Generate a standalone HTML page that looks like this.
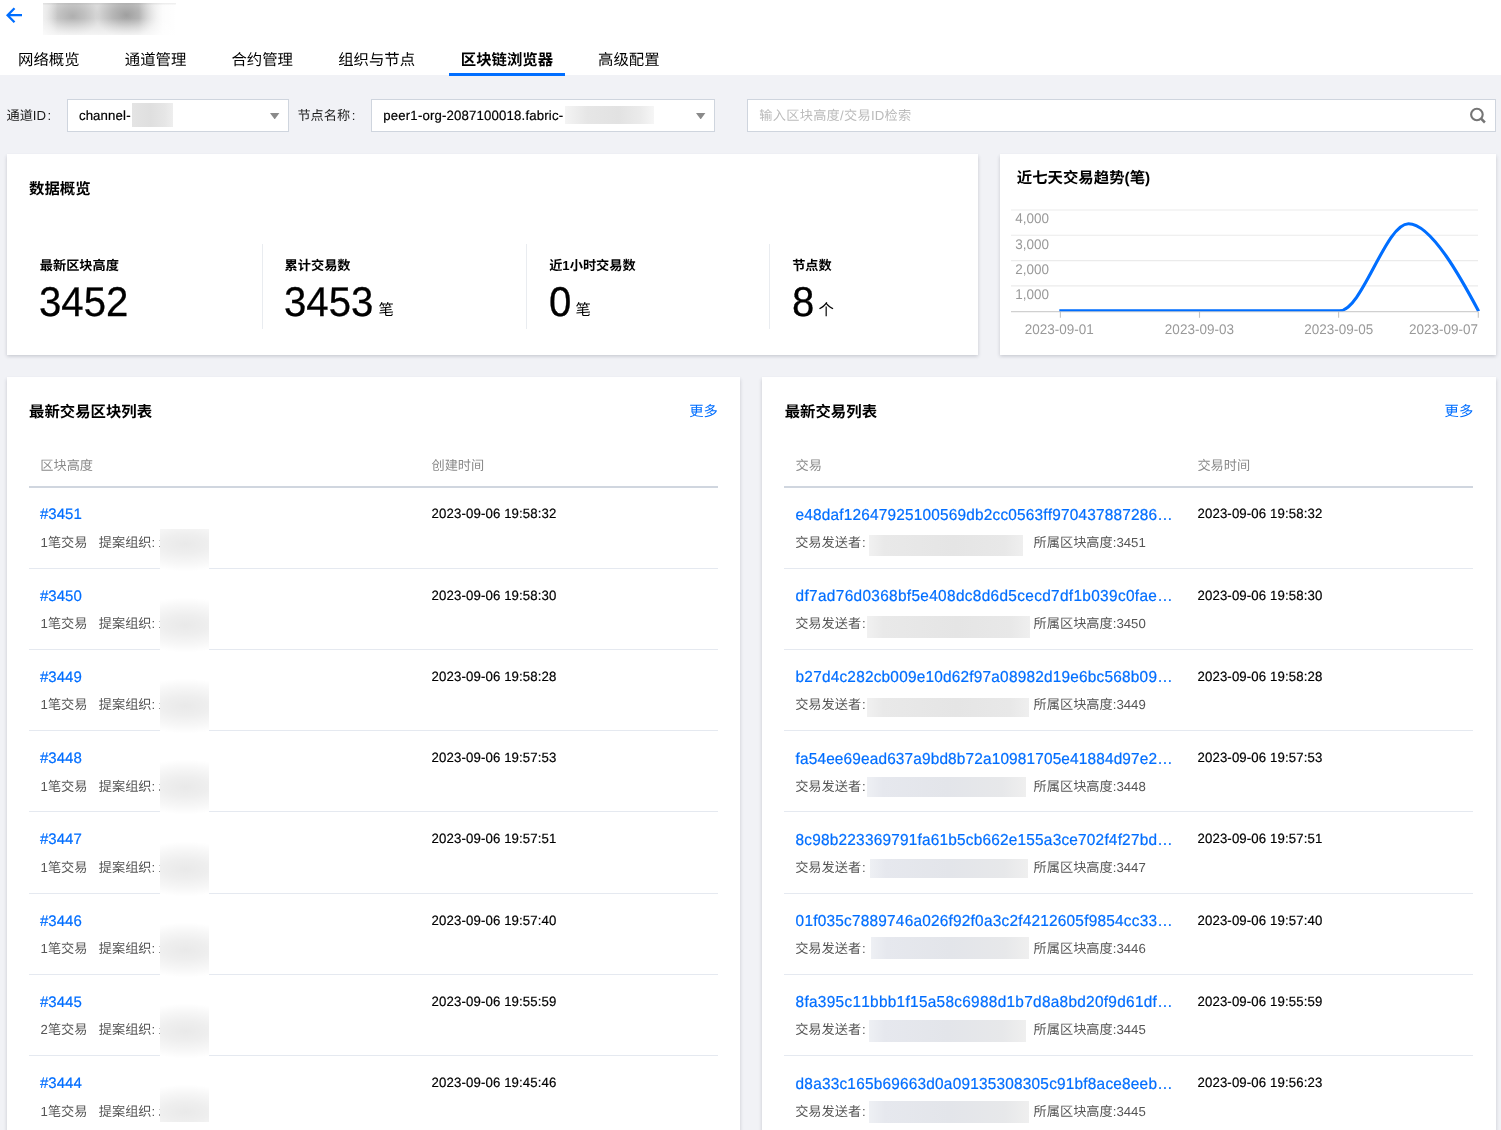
<!DOCTYPE html>
<html lang="zh-CN"><head><meta charset="utf-8"><title>区块链浏览器</title><style>
html,body{margin:0;padding:0}
body{width:1501px;height:1130px;overflow:hidden;position:relative;background:#f1f2f6;font-family:"Liberation Sans","Noto Sans CJK SC",sans-serif;-webkit-font-smoothing:antialiased;text-rendering:geometricPrecision}
#w{position:absolute;left:0;top:0;width:1501px;height:1130px;overflow:hidden;will-change:transform}
.t{position:absolute;white-space:nowrap}
.k{font-kerning:none;font-variant-ligatures:none}
.hash .j{display:inline-block}
</style></head>
<body>
<div id="w">
<div style="position:absolute;left:0.00px;top:0.00px;width:1501.00px;height:75.00px;background:#fff"></div>
<svg style="position:absolute;left:0;top:0" width="30" height="30" viewBox="0 0 30 30"><path d="M14.5 8.2 L7.6 15.2 L14.5 22.2 M7.9 15.2 H22" fill="none" stroke="#006eff" stroke-width="2.3"/></svg>
<div style="position:absolute;left:43.00px;top:3.00px;width:133.00px;height:32.00px;background:linear-gradient(to bottom, rgba(90,90,90,.11) 0, rgba(90,90,90,.07) 1px, rgba(90,90,90,0) 2.5px),linear-gradient(to bottom, rgba(255,255,255,0) 48%, rgba(255,255,255,.72) 100%),linear-gradient(to right, rgba(255,255,255,.6) 0%, rgba(255,255,255,0) 11%, rgba(255,255,255,0) 72%, rgba(255,255,255,.92) 90%, #fff 100%),radial-gradient(ellipse 27px 21px at 29.5px 13px, rgba(100,100,100,.36), rgba(100,100,100,.22) 45%, rgba(100,100,100,0) 100%),radial-gradient(ellipse 31px 23px at 83.5px 12px, rgba(90,90,90,.46), rgba(90,90,90,.28) 45%, rgba(90,90,90,0) 100%),linear-gradient(#dadada,#dadada)"></div>
<div class="t" style="top:50.16px;font-size:15.4px;line-height:22px;color:#000;left:18.00px;">网络概览</div>
<div class="t" style="top:50.16px;font-size:15.4px;line-height:22px;color:#000;left:124.80px;">通道管理</div>
<div class="t" style="top:50.16px;font-size:15.4px;line-height:22px;color:#000;left:231.40px;">合约管理</div>
<div class="t" style="top:50.16px;font-size:15.4px;line-height:22px;color:#000;left:338.20px;">组织与节点</div>
<div class="t" style="top:50.16px;font-size:15.4px;line-height:22px;color:#000;left:460.80px;"><span style="font-weight:bold">区块链浏览器</span></div>
<div class="t" style="top:50.16px;font-size:15.4px;line-height:22px;color:#000;left:598.00px;">高级配置</div>
<div style="position:absolute;left:449.00px;top:73.40px;width:116.00px;height:3.00px;background:#006eff"></div>
<div class="t" style="top:106.13px;font-size:13.2px;line-height:19px;color:#1c1c1c;left:6.50px;">通道ID<span style="margin-left:1.5px">:</span></div>
<div style="position:absolute;left:67.00px;top:99.00px;width:222.40px;height:33.00px;background:#fff;border:1px solid #cfd5de;box-sizing:border-box"></div>
<div class="t" style="top:105.93px;font-size:13.2px;line-height:19px;color:#000;left:78.90px;transform:scale(1,1.02);transform-origin:0 14.07px;-webkit-text-stroke:0.2px #000;letter-spacing:0.15px">channel-</div>
<div style="position:absolute;left:132.00px;top:103.00px;width:40.70px;height:24.00px;background:linear-gradient(to right,#e4e4e4 0%,#dfdfdf 45%,#e6e6e6 80%,#eeeeee 100%)"></div>
<svg style="position:absolute;left:270.3px;top:112.8px" width="9.4" height="6.4" viewBox="0 0 9.4 6.4"><path d="M0 0H9.4L4.7 6.4Z" fill="#8a8a8a"/></svg>
<div class="t" style="top:106.13px;font-size:13.2px;line-height:19px;color:#1c1c1c;left:297.40px;">节点名称<span style="margin-left:1.5px">:</span></div>
<div style="position:absolute;left:370.80px;top:99.00px;width:344.30px;height:33.00px;background:#fff;border:1px solid #cfd5de;box-sizing:border-box"></div>
<div class="t k" style="top:105.93px;font-size:13.2px;line-height:19px;color:#000;left:383.30px;transform:scale(1,1.02);transform-origin:0 14.07px;-webkit-text-stroke:0.2px #000;letter-spacing:0.17px">peer1-org-2087100018.fabric-</div>
<div style="position:absolute;left:564.50px;top:105.80px;width:89.30px;height:18.70px;background:linear-gradient(to right,#f4f4f4 0%,#e6e6e6 25%,#e2e2e2 60%,#ebebeb 85%,#f6f6f6 100%)"></div>
<svg style="position:absolute;left:696.4px;top:112.8px" width="9.4" height="6.4" viewBox="0 0 9.4 6.4"><path d="M0 0H9.4L4.7 6.4Z" fill="#8a8a8a"/></svg>
<div style="position:absolute;left:747.30px;top:99.00px;width:748.80px;height:33.00px;background:#fff;border:1px solid #cfd5de;box-sizing:border-box"></div>
<div class="t" style="top:106.13px;font-size:13.2px;line-height:19px;color:#bbb;left:759.30px;letter-spacing:0.27px">输入区块高度/交易ID检索</div>
<svg style="position:absolute;left:1466px;top:105px" width="24" height="22" viewBox="0 0 24 22"><circle cx="10.9" cy="9.5" r="5.8" fill="none" stroke="#757575" stroke-width="2.1"/><path d="M15.1 13.7 L18.9 17.5" stroke="#757575" stroke-width="2.5" fill="none"/></svg>
<div style="position:absolute;left:7.00px;top:154.00px;width:971.00px;height:200.50px;background:#fff;box-shadow:0 2.2px 3.5px 0 rgba(54,58,80,.24);"></div>
<div style="position:absolute;left:1000.00px;top:154.00px;width:495.60px;height:200.50px;background:#fff;box-shadow:0 2.2px 3.5px 0 rgba(54,58,80,.24);"></div>
<div style="position:absolute;left:7.00px;top:377.00px;width:733.00px;height:763.00px;background:#fff;box-shadow:0 2.2px 3.5px 0 rgba(54,58,80,.24);"></div>
<div style="position:absolute;left:762.30px;top:377.00px;width:733.30px;height:763.00px;background:#fff;box-shadow:0 2.2px 3.5px 0 rgba(54,58,80,.24);"></div>
<div class="t" style="top:179.16px;font-size:15.4px;line-height:22px;color:#000;left:29.00px;"><span style="font-weight:bold">数据概览</span></div>
<div class="t" style="top:255.73px;font-size:13.2px;line-height:19px;color:#000;left:39.80px;font-weight:bold">最新区块高度</div>
<div class="t k" style="top:277.68px;font-size:39.6px;line-height:50px;color:#000;left:39.40px;transform:scale(1.015,1.05);transform-origin:0 38.72px;-webkit-text-stroke:0.3px #000;">3452</div>
<div class="t" style="top:255.73px;font-size:13.2px;line-height:19px;color:#000;left:284.60px;font-weight:bold">累计交易数</div>
<div class="t k" style="top:277.68px;font-size:39.6px;line-height:50px;color:#000;left:284.20px;transform:scale(1.015,1.05);transform-origin:0 38.72px;-webkit-text-stroke:0.3px #000;">3453</div>
<div class="t" style="top:300.26px;font-size:15.4px;line-height:22px;color:#000;left:378.40px;">笔</div>
<div class="t" style="top:255.73px;font-size:13.2px;line-height:19px;color:#000;left:549.20px;font-weight:bold">近1小时交易数</div>
<div class="t k" style="top:277.68px;font-size:39.6px;line-height:50px;color:#000;left:548.80px;transform:scale(1.015,1.05);transform-origin:0 38.72px;-webkit-text-stroke:0.3px #000;">0</div>
<div class="t" style="top:300.26px;font-size:15.4px;line-height:22px;color:#000;left:575.40px;">笔</div>
<div class="t" style="top:255.73px;font-size:13.2px;line-height:19px;color:#000;left:792.20px;font-weight:bold">节点数</div>
<div class="t k" style="top:277.68px;font-size:39.6px;line-height:50px;color:#000;left:791.80px;transform:scale(1.015,1.05);transform-origin:0 38.72px;-webkit-text-stroke:0.3px #000;">8</div>
<div class="t" style="top:300.26px;font-size:15.4px;line-height:22px;color:#000;left:818.40px;">个</div>
<div style="position:absolute;left:262.30px;top:244.30px;width:1.00px;height:85.00px;background:#e9ecf0"></div>
<div style="position:absolute;left:526.30px;top:244.30px;width:1.00px;height:85.00px;background:#e9ecf0"></div>
<div style="position:absolute;left:769.20px;top:244.30px;width:1.00px;height:85.00px;background:#e9ecf0"></div>
<div class="t" style="top:168.16px;font-size:15.4px;line-height:22px;color:#000;left:1016.80px;font-weight:bold">近七天交易趋势(笔)</div>
<svg style="position:absolute;left:1000px;top:154px" width="496" height="200" viewBox="1000 154 496 200"><path d="M1011 210H1478" stroke="#ebebeb" stroke-width="1.1"/><path d="M1011 235.3H1478" stroke="#ebebeb" stroke-width="1.1"/><path d="M1011 260.6H1478" stroke="#ebebeb" stroke-width="1.1"/><path d="M1011 285.9H1478" stroke="#ebebeb" stroke-width="1.1"/><path d="M1011 311.6H1478" stroke="#d0d0d0" stroke-width="1.1"/><path d="M1060.4 311.6V317.8" stroke="#c4c4c4" stroke-width="1.1"/><path d="M1199.5 311.6V317.8" stroke="#c4c4c4" stroke-width="1.1"/><path d="M1338.6 311.6V317.8" stroke="#c4c4c4" stroke-width="1.1"/><path d="M1478.3 311.6V317.8" stroke="#c4c4c4" stroke-width="1.1"/><clipPath id="cp"><rect x="1000" y="200" width="480" height="111.3"/></clipPath><path clip-path="url(#cp)" d="M1059.3 310.9 H1339.3 C1362.3 310.9 1385.5 223.7 1408.5 223.7 C1431.5 223.7 1462 280 1478.7 311.3" fill="none" stroke="#006eff" stroke-width="3.1" stroke-linejoin="round"/></svg>
<div class="t" style="top:209.12px;font-size:13.5px;line-height:19px;color:#999;left:1015.20px;transform:scale(1,1.04);transform-origin:0 14.18px;">4,000</div>
<div class="t" style="top:234.52px;font-size:13.5px;line-height:19px;color:#999;left:1015.20px;transform:scale(1,1.04);transform-origin:0 14.18px;">3,000</div>
<div class="t" style="top:259.72px;font-size:13.5px;line-height:19px;color:#999;left:1015.20px;transform:scale(1,1.04);transform-origin:0 14.18px;">2,000</div>
<div class="t" style="top:285.12px;font-size:13.5px;line-height:19px;color:#999;left:1015.20px;transform:scale(1,1.04);transform-origin:0 14.18px;">1,000</div>
<div class="t" style="top:319.62px;font-size:13.5px;line-height:19px;color:#999;left:759.30px;width:600px;text-align:center;transform:scale(1,1.04);transform-origin:50% 14.18px;">2023-09-01</div>
<div class="t" style="top:319.62px;font-size:13.5px;line-height:19px;color:#999;left:899.40px;width:600px;text-align:center;transform:scale(1,1.04);transform-origin:50% 14.18px;">2023-09-03</div>
<div class="t" style="top:319.62px;font-size:13.5px;line-height:19px;color:#999;left:1038.70px;width:600px;text-align:center;transform:scale(1,1.04);transform-origin:50% 14.18px;">2023-09-05</div>
<div class="t" style="top:319.62px;font-size:13.5px;line-height:19px;color:#999;right:23.00px;transform:scale(1,1.04);transform-origin:100% 14.18px;">2023-09-07</div>
<div class="t" style="top:402.06px;font-size:15.4px;line-height:22px;color:#000;left:29.00px;font-weight:bold">最新交易区块列表</div>
<div class="t" style="top:402.35px;font-size:14.3px;line-height:21px;color:#006eff;right:783.10px;">更多</div>
<div class="t" style="top:456.23px;font-size:13.2px;line-height:19px;color:#8a8a8a;left:40.30px;">区块高度</div>
<div class="t" style="top:456.23px;font-size:13.2px;line-height:19px;color:#8a8a8a;left:431.50px;">创建时间</div>
<div style="position:absolute;left:29.30px;top:486.10px;width:688.60px;height:1.50px;background:#d0d6df"></div>
<div class="t k" style="top:503.66px;font-size:15.4px;line-height:22px;color:#006eff;left:40.00px;transform:scale(0.975,0.99);transform-origin:0 16.34px;-webkit-text-stroke:0.2px #006eff;margin-top:0.6px">#3451</div>
<div class="t" style="top:532.83px;font-size:13.2px;line-height:19px;color:#555;left:40.60px;transform:translateY(0.4px)"><span class="d">1</span>笔交易<span style="margin-left:11.3px"></span>提案组织:</div>
<div class="t k" style="top:504.33px;font-size:13.2px;line-height:19px;color:#000;left:431.60px;transform:scale(1,1.02);transform-origin:0 14.07px;-webkit-text-stroke:0.2px #000;letter-spacing:0.13px">2023-09-06 19:58:32</div>
<div style="position:absolute;left:29.30px;top:567.50px;width:688.60px;height:1.10px;background:#e5e9f0"></div>
<div class="t k" style="top:584.91px;font-size:15.4px;line-height:22px;color:#006eff;left:40.00px;transform:scale(0.975,0.99);transform-origin:0 16.34px;-webkit-text-stroke:0.2px #006eff;margin-top:0.6px">#3450</div>
<div class="t" style="top:614.08px;font-size:13.2px;line-height:19px;color:#555;left:40.60px;transform:translateY(0.4px)"><span class="d">1</span>笔交易<span style="margin-left:11.3px"></span>提案组织:</div>
<div class="t k" style="top:585.58px;font-size:13.2px;line-height:19px;color:#000;left:431.60px;transform:scale(1,1.02);transform-origin:0 14.07px;-webkit-text-stroke:0.2px #000;letter-spacing:0.13px">2023-09-06 19:58:30</div>
<div style="position:absolute;left:29.30px;top:648.75px;width:688.60px;height:1.10px;background:#e5e9f0"></div>
<div class="t k" style="top:666.16px;font-size:15.4px;line-height:22px;color:#006eff;left:40.00px;transform:scale(0.975,0.99);transform-origin:0 16.34px;-webkit-text-stroke:0.2px #006eff;margin-top:0.6px">#3449</div>
<div class="t" style="top:695.33px;font-size:13.2px;line-height:19px;color:#555;left:40.60px;transform:translateY(0.4px)"><span class="d">1</span>笔交易<span style="margin-left:11.3px"></span>提案组织:</div>
<div class="t k" style="top:666.83px;font-size:13.2px;line-height:19px;color:#000;left:431.60px;transform:scale(1,1.02);transform-origin:0 14.07px;-webkit-text-stroke:0.2px #000;letter-spacing:0.13px">2023-09-06 19:58:28</div>
<div style="position:absolute;left:29.30px;top:730.00px;width:688.60px;height:1.10px;background:#e5e9f0"></div>
<div class="t k" style="top:747.41px;font-size:15.4px;line-height:22px;color:#006eff;left:40.00px;transform:scale(0.975,0.99);transform-origin:0 16.34px;-webkit-text-stroke:0.2px #006eff;margin-top:0.6px">#3448</div>
<div class="t" style="top:776.58px;font-size:13.2px;line-height:19px;color:#555;left:40.60px;transform:translateY(0.4px)"><span class="d">1</span>笔交易<span style="margin-left:11.3px"></span>提案组织:</div>
<div class="t k" style="top:748.08px;font-size:13.2px;line-height:19px;color:#000;left:431.60px;transform:scale(1,1.02);transform-origin:0 14.07px;-webkit-text-stroke:0.2px #000;letter-spacing:0.13px">2023-09-06 19:57:53</div>
<div style="position:absolute;left:29.30px;top:811.25px;width:688.60px;height:1.10px;background:#e5e9f0"></div>
<div class="t k" style="top:828.66px;font-size:15.4px;line-height:22px;color:#006eff;left:40.00px;transform:scale(0.975,0.99);transform-origin:0 16.34px;-webkit-text-stroke:0.2px #006eff;margin-top:0.6px">#3447</div>
<div class="t" style="top:857.83px;font-size:13.2px;line-height:19px;color:#555;left:40.60px;transform:translateY(0.4px)"><span class="d">1</span>笔交易<span style="margin-left:11.3px"></span>提案组织:</div>
<div class="t k" style="top:829.33px;font-size:13.2px;line-height:19px;color:#000;left:431.60px;transform:scale(1,1.02);transform-origin:0 14.07px;-webkit-text-stroke:0.2px #000;letter-spacing:0.13px">2023-09-06 19:57:51</div>
<div style="position:absolute;left:29.30px;top:892.50px;width:688.60px;height:1.10px;background:#e5e9f0"></div>
<div class="t k" style="top:909.91px;font-size:15.4px;line-height:22px;color:#006eff;left:40.00px;transform:scale(0.975,0.99);transform-origin:0 16.34px;-webkit-text-stroke:0.2px #006eff;margin-top:0.6px">#3446</div>
<div class="t" style="top:939.08px;font-size:13.2px;line-height:19px;color:#555;left:40.60px;transform:translateY(0.4px)"><span class="d">1</span>笔交易<span style="margin-left:11.3px"></span>提案组织:</div>
<div class="t k" style="top:910.58px;font-size:13.2px;line-height:19px;color:#000;left:431.60px;transform:scale(1,1.02);transform-origin:0 14.07px;-webkit-text-stroke:0.2px #000;letter-spacing:0.13px">2023-09-06 19:57:40</div>
<div style="position:absolute;left:29.30px;top:973.75px;width:688.60px;height:1.10px;background:#e5e9f0"></div>
<div class="t k" style="top:991.16px;font-size:15.4px;line-height:22px;color:#006eff;left:40.00px;transform:scale(0.975,0.99);transform-origin:0 16.34px;-webkit-text-stroke:0.2px #006eff;margin-top:0.6px">#3445</div>
<div class="t" style="top:1020.33px;font-size:13.2px;line-height:19px;color:#555;left:40.60px;transform:translateY(0.4px)"><span class="d">2</span>笔交易<span style="margin-left:11.3px"></span>提案组织:</div>
<div class="t k" style="top:991.83px;font-size:13.2px;line-height:19px;color:#000;left:431.60px;transform:scale(1,1.02);transform-origin:0 14.07px;-webkit-text-stroke:0.2px #000;letter-spacing:0.13px">2023-09-06 19:55:59</div>
<div style="position:absolute;left:29.30px;top:1055.00px;width:688.60px;height:1.10px;background:#e5e9f0"></div>
<div class="t k" style="top:1072.41px;font-size:15.4px;line-height:22px;color:#006eff;left:40.00px;transform:scale(0.975,0.99);transform-origin:0 16.34px;-webkit-text-stroke:0.2px #006eff;margin-top:0.6px">#3444</div>
<div class="t" style="top:1101.58px;font-size:13.2px;line-height:19px;color:#555;left:40.60px;transform:translateY(0.4px)"><span class="d">1</span>笔交易<span style="margin-left:11.3px"></span>提案组织:</div>
<div class="t k" style="top:1073.08px;font-size:13.2px;line-height:19px;color:#000;left:431.60px;transform:scale(1,1.02);transform-origin:0 14.07px;-webkit-text-stroke:0.2px #000;letter-spacing:0.13px">2023-09-06 19:45:46</div>
<div style="position:absolute;left:159.00px;top:540.20px;width:1.00px;height:1.00px;background:#c9c9c9"></div>
<div style="position:absolute;left:159.00px;top:545.70px;width:1.00px;height:1.30px;background:#8e8e8e"></div>
<div style="position:absolute;left:159.00px;top:621.45px;width:1.00px;height:1.00px;background:#c9c9c9"></div>
<div style="position:absolute;left:159.00px;top:626.95px;width:1.00px;height:1.30px;background:#8e8e8e"></div>
<div style="position:absolute;left:159.00px;top:702.70px;width:1.00px;height:1.00px;background:#c9c9c9"></div>
<div style="position:absolute;left:159.00px;top:708.20px;width:1.00px;height:1.30px;background:#8e8e8e"></div>
<div style="position:absolute;left:159.00px;top:783.95px;width:1.00px;height:1.00px;background:#c9c9c9"></div>
<div style="position:absolute;left:159.00px;top:789.45px;width:1.00px;height:1.30px;background:#8e8e8e"></div>
<div style="position:absolute;left:159.00px;top:865.20px;width:1.00px;height:1.00px;background:#c9c9c9"></div>
<div style="position:absolute;left:159.00px;top:870.70px;width:1.00px;height:1.30px;background:#8e8e8e"></div>
<div style="position:absolute;left:159.00px;top:946.45px;width:1.00px;height:1.00px;background:#c9c9c9"></div>
<div style="position:absolute;left:159.00px;top:951.95px;width:1.00px;height:1.30px;background:#8e8e8e"></div>
<div style="position:absolute;left:159.00px;top:1027.70px;width:1.00px;height:1.00px;background:#c9c9c9"></div>
<div style="position:absolute;left:159.00px;top:1033.20px;width:1.00px;height:1.30px;background:#8e8e8e"></div>
<div style="position:absolute;left:159.00px;top:1108.95px;width:1.00px;height:1.00px;background:#c9c9c9"></div>
<div style="position:absolute;left:159.00px;top:1114.45px;width:1.00px;height:1.30px;background:#8e8e8e"></div>
<div style="position:absolute;left:160px;top:529px;width:49px;height:593px;background:#fff;overflow:hidden"><div style="position:absolute;left:0;top:-13.50px;width:49px;height:56px;background:radial-gradient(ellipse 62px 27.5px at 52% 50%, rgba(0,0,0,.085) 0%, rgba(0,0,0,.068) 35%, rgba(0,0,0,.03) 72%, rgba(0,0,0,0) 100%)"></div><div style="position:absolute;left:0;top:67.75px;width:49px;height:56px;background:radial-gradient(ellipse 62px 27.5px at 52% 50%, rgba(0,0,0,.085) 0%, rgba(0,0,0,.068) 35%, rgba(0,0,0,.03) 72%, rgba(0,0,0,0) 100%)"></div><div style="position:absolute;left:0;top:149.00px;width:49px;height:56px;background:radial-gradient(ellipse 62px 27.5px at 52% 50%, rgba(0,0,0,.085) 0%, rgba(0,0,0,.068) 35%, rgba(0,0,0,.03) 72%, rgba(0,0,0,0) 100%)"></div><div style="position:absolute;left:0;top:230.25px;width:49px;height:56px;background:radial-gradient(ellipse 62px 27.5px at 52% 50%, rgba(0,0,0,.085) 0%, rgba(0,0,0,.068) 35%, rgba(0,0,0,.03) 72%, rgba(0,0,0,0) 100%)"></div><div style="position:absolute;left:0;top:311.50px;width:49px;height:56px;background:radial-gradient(ellipse 62px 27.5px at 52% 50%, rgba(0,0,0,.085) 0%, rgba(0,0,0,.068) 35%, rgba(0,0,0,.03) 72%, rgba(0,0,0,0) 100%)"></div><div style="position:absolute;left:0;top:392.75px;width:49px;height:56px;background:radial-gradient(ellipse 62px 27.5px at 52% 50%, rgba(0,0,0,.085) 0%, rgba(0,0,0,.068) 35%, rgba(0,0,0,.03) 72%, rgba(0,0,0,0) 100%)"></div><div style="position:absolute;left:0;top:474.00px;width:49px;height:56px;background:radial-gradient(ellipse 62px 27.5px at 52% 50%, rgba(0,0,0,.085) 0%, rgba(0,0,0,.068) 35%, rgba(0,0,0,.03) 72%, rgba(0,0,0,0) 100%)"></div><div style="position:absolute;left:0;top:555.25px;width:49px;height:56px;background:radial-gradient(ellipse 62px 27.5px at 52% 50%, rgba(0,0,0,.085) 0%, rgba(0,0,0,.068) 35%, rgba(0,0,0,.03) 72%, rgba(0,0,0,0) 100%)"></div></div>
<div class="t" style="top:402.06px;font-size:15.4px;line-height:22px;color:#000;left:784.70px;font-weight:bold">最新交易列表</div>
<div class="t" style="top:402.35px;font-size:14.3px;line-height:21px;color:#006eff;right:27.80px;">更多</div>
<div class="t" style="top:456.23px;font-size:13.2px;line-height:19px;color:#8a8a8a;left:795.60px;">交易</div>
<div class="t" style="top:456.23px;font-size:13.2px;line-height:19px;color:#8a8a8a;left:1197.40px;">交易时间</div>
<div style="position:absolute;left:784.30px;top:486.10px;width:688.90px;height:1.50px;background:#d0d6df"></div>
<div class="t k" style="top:504.96px;font-size:15.4px;line-height:22px;color:#006eff;left:795.60px;transform:scale(1,1.03);transform-origin:0 16.34px;-webkit-text-stroke:0.2px #006eff;letter-spacing:0.188px">e48daf12647925100569db2cc0563ff970437887286…</div>
<div class="t" style="top:532.83px;font-size:13.2px;line-height:19px;color:#555;left:795.20px;transform:translateY(0.4px)">交易发送者<span style="margin-left:0.8px">:</span></div>
<div style="position:absolute;left:868.70px;top:534.80px;width:154.30px;height:21.00px;background:linear-gradient(to right,#f1f1f1 0%,#e9e9e9 10%,#e5e5e5 55%,#e8e8e8 88%,#efefef 100%)"></div>
<div class="t" style="top:532.83px;font-size:13.2px;line-height:19px;color:#555;left:1033.60px;transform:translateY(0.4px)">所属区块高度:<span class="d">3451</span></div>
<div class="t k" style="top:504.33px;font-size:13.2px;line-height:19px;color:#000;left:1197.50px;transform:scale(1,1.02);transform-origin:0 14.07px;-webkit-text-stroke:0.2px #000;letter-spacing:0.13px">2023-09-06 19:58:32</div>
<div style="position:absolute;left:784.30px;top:567.50px;width:688.90px;height:1.10px;background:#e5e9f0"></div>
<div class="t k" style="top:586.21px;font-size:15.4px;line-height:22px;color:#006eff;left:795.60px;transform:scale(1,1.03);transform-origin:0 16.34px;-webkit-text-stroke:0.2px #006eff;letter-spacing:0.328px">df7ad76d0368bf5e408dc8d6d5cecd7df1b039c0fae…</div>
<div class="t" style="top:614.08px;font-size:13.2px;line-height:19px;color:#555;left:795.20px;transform:translateY(0.4px)">交易发送者<span style="margin-left:0.8px">:</span></div>
<div style="position:absolute;left:867.10px;top:615.80px;width:162.90px;height:22.10px;background:linear-gradient(to right,#f1f1f1 0%,#e9e9e9 10%,#e5e5e5 55%,#e8e8e8 88%,#efefef 100%)"></div>
<div class="t" style="top:614.08px;font-size:13.2px;line-height:19px;color:#555;left:1033.60px;transform:translateY(0.4px)">所属区块高度:<span class="d">3450</span></div>
<div class="t k" style="top:585.58px;font-size:13.2px;line-height:19px;color:#000;left:1197.50px;transform:scale(1,1.02);transform-origin:0 14.07px;-webkit-text-stroke:0.2px #000;letter-spacing:0.13px">2023-09-06 19:58:30</div>
<div style="position:absolute;left:784.30px;top:648.75px;width:688.90px;height:1.10px;background:#e5e9f0"></div>
<div class="t k" style="top:667.46px;font-size:15.4px;line-height:22px;color:#006eff;left:795.60px;transform:scale(1,1.03);transform-origin:0 16.34px;-webkit-text-stroke:0.2px #006eff;letter-spacing:0.213px">b27d4c282cb009e10d62f97a08982d19e6bc568b09…</div>
<div class="t" style="top:695.33px;font-size:13.2px;line-height:19px;color:#555;left:795.20px;transform:translateY(0.4px)">交易发送者<span style="margin-left:0.8px">:</span></div>
<div style="position:absolute;left:867.10px;top:698.00px;width:162.10px;height:18.60px;background:linear-gradient(to right,#f1f1f1 0%,#e9e9e9 10%,#e5e5e5 55%,#e8e8e8 88%,#efefef 100%)"></div>
<div class="t" style="top:695.33px;font-size:13.2px;line-height:19px;color:#555;left:1033.60px;transform:translateY(0.4px)">所属区块高度:<span class="d">3449</span></div>
<div class="t k" style="top:666.83px;font-size:13.2px;line-height:19px;color:#000;left:1197.50px;transform:scale(1,1.02);transform-origin:0 14.07px;-webkit-text-stroke:0.2px #000;letter-spacing:0.13px">2023-09-06 19:58:28</div>
<div style="position:absolute;left:784.30px;top:730.00px;width:688.90px;height:1.10px;background:#e5e9f0"></div>
<div class="t k" style="top:748.71px;font-size:15.4px;line-height:22px;color:#006eff;left:795.60px;transform:scale(1,1.03);transform-origin:0 16.34px;-webkit-text-stroke:0.2px #006eff;letter-spacing:0.152px">fa54ee69ead637a9bd8b72a10981705e41884d97e2…</div>
<div class="t" style="top:776.58px;font-size:13.2px;line-height:19px;color:#555;left:795.20px;transform:translateY(0.4px)">交易发送者<span style="margin-left:0.8px">:</span></div>
<div style="position:absolute;left:867.10px;top:777.40px;width:158.60px;height:19.20px;background:linear-gradient(to right,#eef0f4 0%,#e6e8ee 10%,#e3e5ea 50%,#e7e8ea 85%,#efefef 100%)"></div>
<div class="t" style="top:776.58px;font-size:13.2px;line-height:19px;color:#555;left:1033.60px;transform:translateY(0.4px)">所属区块高度:<span class="d">3448</span></div>
<div class="t k" style="top:748.08px;font-size:13.2px;line-height:19px;color:#000;left:1197.50px;transform:scale(1,1.02);transform-origin:0 14.07px;-webkit-text-stroke:0.2px #000;letter-spacing:0.13px">2023-09-06 19:57:53</div>
<div style="position:absolute;left:784.30px;top:811.25px;width:688.90px;height:1.10px;background:#e5e9f0"></div>
<div class="t k" style="top:829.96px;font-size:15.4px;line-height:22px;color:#006eff;left:795.60px;transform:scale(1,1.03);transform-origin:0 16.34px;-webkit-text-stroke:0.2px #006eff;letter-spacing:0.209px">8c98b223369791fa61b5cb662e155a3ce702f4f27bd…</div>
<div class="t" style="top:857.83px;font-size:13.2px;line-height:19px;color:#555;left:795.20px;transform:translateY(0.4px)">交易发送者<span style="margin-left:0.8px">:</span></div>
<div style="position:absolute;left:870.10px;top:858.80px;width:157.70px;height:19.20px;background:linear-gradient(to right,#eef0f4 0%,#e6e8ee 10%,#e3e5ea 50%,#e7e8ea 85%,#efefef 100%)"></div>
<div class="t" style="top:857.83px;font-size:13.2px;line-height:19px;color:#555;left:1033.60px;transform:translateY(0.4px)">所属区块高度:<span class="d">3447</span></div>
<div class="t k" style="top:829.33px;font-size:13.2px;line-height:19px;color:#000;left:1197.50px;transform:scale(1,1.02);transform-origin:0 14.07px;-webkit-text-stroke:0.2px #000;letter-spacing:0.13px">2023-09-06 19:57:51</div>
<div style="position:absolute;left:784.30px;top:892.50px;width:688.90px;height:1.10px;background:#e5e9f0"></div>
<div class="t k" style="top:911.21px;font-size:15.4px;line-height:22px;color:#006eff;left:795.60px;transform:scale(1,1.03);transform-origin:0 16.34px;-webkit-text-stroke:0.2px #006eff;letter-spacing:0.224px">01f035c7889746a026f92f0a3c2f4212605f9854cc33…</div>
<div class="t" style="top:939.08px;font-size:13.2px;line-height:19px;color:#555;left:795.20px;transform:translateY(0.4px)">交易发送者<span style="margin-left:0.8px">:</span></div>
<div style="position:absolute;left:871.10px;top:937.10px;width:158.10px;height:21.60px;background:linear-gradient(to right,#eef0f4 0%,#e6e8ee 10%,#e3e5ea 50%,#e7e8ea 85%,#efefef 100%)"></div>
<div class="t" style="top:939.08px;font-size:13.2px;line-height:19px;color:#555;left:1033.60px;transform:translateY(0.4px)">所属区块高度:<span class="d">3446</span></div>
<div class="t k" style="top:910.58px;font-size:13.2px;line-height:19px;color:#000;left:1197.50px;transform:scale(1,1.02);transform-origin:0 14.07px;-webkit-text-stroke:0.2px #000;letter-spacing:0.13px">2023-09-06 19:57:40</div>
<div style="position:absolute;left:784.30px;top:973.75px;width:688.90px;height:1.10px;background:#e5e9f0"></div>
<div class="t k" style="top:992.46px;font-size:15.4px;line-height:22px;color:#006eff;left:795.60px;transform:scale(1,1.03);transform-origin:0 16.34px;-webkit-text-stroke:0.2px #006eff;letter-spacing:0.288px">8fa395c11bbb1f15a58c6988d1b7d8a8bd20f9d61df…</div>
<div class="t" style="top:1020.33px;font-size:13.2px;line-height:19px;color:#555;left:795.20px;transform:translateY(0.4px)">交易发送者<span style="margin-left:0.8px">:</span></div>
<div style="position:absolute;left:868.70px;top:1020.00px;width:157.00px;height:21.80px;background:linear-gradient(to right,#eef0f4 0%,#e6e8ee 10%,#e3e5ea 50%,#e7e8ea 85%,#efefef 100%)"></div>
<div class="t" style="top:1020.33px;font-size:13.2px;line-height:19px;color:#555;left:1033.60px;transform:translateY(0.4px)">所属区块高度:<span class="d">3445</span></div>
<div class="t k" style="top:991.83px;font-size:13.2px;line-height:19px;color:#000;left:1197.50px;transform:scale(1,1.02);transform-origin:0 14.07px;-webkit-text-stroke:0.2px #000;letter-spacing:0.13px">2023-09-06 19:55:59</div>
<div style="position:absolute;left:784.30px;top:1055.00px;width:688.90px;height:1.10px;background:#e5e9f0"></div>
<div class="t k" style="top:1073.71px;font-size:15.4px;line-height:22px;color:#006eff;left:795.60px;transform:scale(1,1.03);transform-origin:0 16.34px;-webkit-text-stroke:0.2px #006eff;letter-spacing:0.213px">d8a33c165b69663d0a09135308305c91bf8ace8eeb…</div>
<div class="t" style="top:1101.58px;font-size:13.2px;line-height:19px;color:#555;left:795.20px;transform:translateY(0.4px)">交易发送者<span style="margin-left:0.8px">:</span></div>
<div style="position:absolute;left:868.70px;top:1100.70px;width:160.50px;height:21.90px;background:linear-gradient(to right,#eef0f4 0%,#e6e8ee 10%,#e3e5ea 50%,#e7e8ea 85%,#efefef 100%)"></div>
<div class="t" style="top:1101.58px;font-size:13.2px;line-height:19px;color:#555;left:1033.60px;transform:translateY(0.4px)">所属区块高度:<span class="d">3445</span></div>
<div class="t k" style="top:1073.08px;font-size:13.2px;line-height:19px;color:#000;left:1197.50px;transform:scale(1,1.02);transform-origin:0 14.07px;-webkit-text-stroke:0.2px #000;letter-spacing:0.13px">2023-09-06 19:56:23</div>
</div>
</body></html>
